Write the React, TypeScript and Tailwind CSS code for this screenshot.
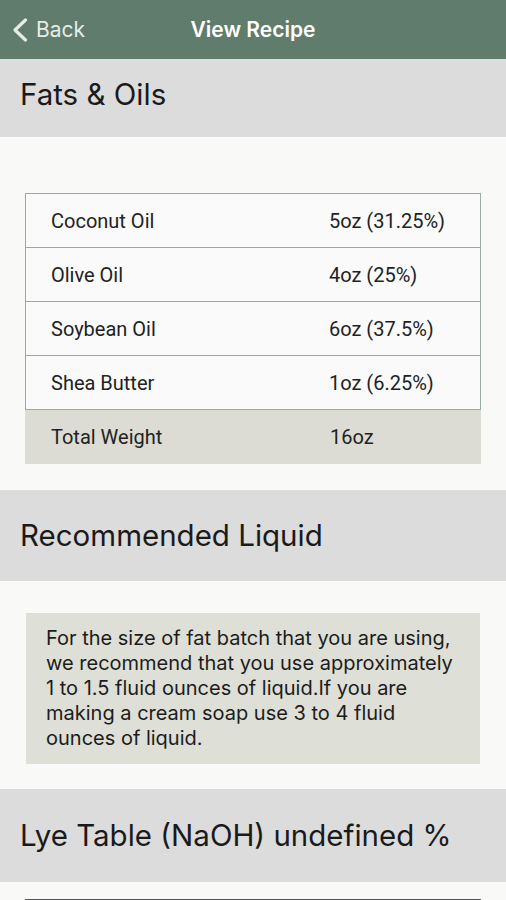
const fats = [
  { name: "Coconut Oil", amount: "5oz (31.25%)" },
  { name: "Olive Oil", amount: "4oz (25%)" },
  { name: "Soybean Oil", amount: "6oz (37.5%)" },
  { name: "Shea Butter", amount: "1oz (6.25%)" },
];

function SectionHeader({ title, className = "" }: { title: string; className?: string }) {
  return (
    <div className={`bg-[#dcdcdc] flex items-center px-5 text-[29.5px] text-[#1a1a1a] ${className}`}>
      {title}
    </div>
  );
}

export default function App() {
  return (
    <div className="w-[506px] h-[900px] overflow-hidden bg-[#f9f9f7] font-['Inter',sans-serif]">
      {/* Nav bar */}
      <div className="relative h-[59px] bg-[#5f7c6c] flex items-center">
        <div className="flex items-center pl-3 text-[#e6ece8]">
          <svg width="16" height="24" viewBox="0 0 16 24" fill="none">
            <path d="M13.5 2 L3 12 L13.5 22" stroke="currentColor" strokeWidth="3.2" strokeLinecap="round" strokeLinejoin="round" />
          </svg>
          <span className="text-[21px] ml-[8px]">Back</span>
        </div>
        <div className="absolute inset-x-0 text-center text-white font-semibold text-[21px] pointer-events-none">
          View Recipe
        </div>
      </div>

      <SectionHeader title="Fats & Oils" className="h-[78px] pb-2" />

      <div className="px-[25px] pt-[56px] pb-[26px]">
        <div className="border border-[#9aaaa4] bg-[#fafafa] font-['Roboto',sans-serif] text-[20px] text-[#222]">
          {fats.map((f, i) => (
            <div
              key={f.name}
              className={`flex items-center ${i > 0 ? "h-[54px] border-t border-[#9aaaa4]" : "h-[53px]"}`}
            >
              <span className="w-[303px] pl-[25px]">{f.name}</span>
              <span>{f.amount}</span>
            </div>
          ))}
        </div>
        <div className="flex items-center h-[54px] bg-[#dcdcd4] font-['Roboto',sans-serif] text-[20px] text-[#222]">
          <span className="w-[305px] pl-[26px]">Total Weight</span>
          <span>16oz</span>
        </div>
      </div>

      <SectionHeader title="Recommended Liquid" className="h-[91px]" />

      <div className="px-[26px] pt-[32px] pb-[25px]">
        <div className="bg-[#dedfd6] px-5 py-[13px] text-[20px] leading-[25px] text-[#1c1c1c]">
          For the size of fat batch that you are using, we recommend that you use approximately 1 to 1.5 fluid
          ounces of liquid.If you are making a cream soap use 3 to 4 fluid ounces of liquid.
        </div>
      </div>

      <SectionHeader title="Lye Table (NaOH) undefined %" className="h-[93px]" />

      <div className="px-[25px] pt-[17px]">
        <div className="border-t-2 border-[#555] h-4" />
      </div>
    </div>
  );
}
